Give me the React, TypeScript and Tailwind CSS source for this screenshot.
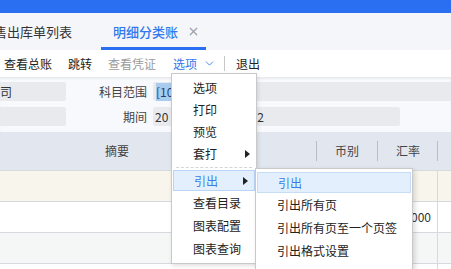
import { ChevronDown, X } from 'lucide-react';

const font = { fontFamily: '"Noto Sans CJK SC", "Noto Sans", sans-serif' };

function Arrow() {
  return <span className="ml-auto mr-[6px] h-0 w-0 border-y-[4px] border-l-[5px] border-y-transparent border-l-[#222]" />;
}

const rows = [
  { bg: 'bg-[#f8f6ec]', rate: '' },
  { bg: 'bg-white', rate: '000' },
  { bg: 'bg-[#f5f7f7]', rate: '' },
  { bg: 'bg-white', rate: '' },
];

export default function App() {
  return (
    <div className="relative h-[269px] w-[451px] overflow-hidden bg-white text-[12px] text-[#222]" style={font}>
      <div className="h-[13px] bg-[#2a6ff1]" />

      <div className="flex h-[37px] items-stretch overflow-hidden bg-[#f5f6fa]">
        <div className="-ml-[6px] flex w-[107px] shrink-0 items-center whitespace-nowrap text-[13px] text-[#333]">售出库单列表</div>
        <div className="flex w-[105px] items-center border-b-[3px] border-[#2a6ff1] pl-[12px] pt-[3px]">
          <span className="text-[13px] font-medium text-[#3178ee]">明细分类账</span>
          <X size={13} strokeWidth={2.2} className="ml-[9px] text-[#9aa0aa]" />
        </div>
      </div>

      <div className="flex h-[27px] items-center bg-white pl-[4px]">
        <span>查看总账</span>
        <span className="ml-[16px]">跳转</span>
        <span className="ml-[16px] text-[#9b9b9b]">查看凭证</span>
        <span className="ml-[17px] text-[#3178ee]">选项</span>
        <ChevronDown size={13} strokeWidth={1.6} className="ml-[6px] text-[#3178ee]" />
        <span className="ml-[8px] h-[15px] w-px bg-[#c8c8c8]" />
        <span className="ml-[11px]">退出</span>
      </div>

      <div className="bg-[#f8f9fc] pt-[5px] shadow-[inset_0_2px_2px_rgba(0,0,0,0.06)]">
        <div className="flex h-[19px] items-center">
          <div className="flex h-full w-[66px] items-center rounded-r-[2px] bg-[#e8eaee] text-[#333]">司</div>
          <span className="ml-auto w-[80px] pr-[6px] text-right text-[#444]">科目范围</span>
          <div className="flex h-full w-[298px] items-center rounded-l-[2px] bg-[#e8eaee] pl-[3px]">
            <span className="bg-[#a9cbee] text-[#1f3f7a]">[10</span>
          </div>
        </div>
        <div className="mt-[6px] flex h-[19px] items-center">
          <div className="h-full w-[66px] rounded-r-[2px] bg-[#e8eaee]" />
          <span className="ml-auto pr-[6px] text-[#444]">期间</span>
          <div className="mr-[51px] flex h-full w-[247px] items-center rounded-[2px] bg-[#e8eaee] pl-[2px] text-[#333]">
            <span>20</span>
            <span className="ml-[89px]">2</span>
          </div>
        </div>
        <div className="h-[6px]" />
      </div>

      <div className="grid h-[38px] grid-cols-[316px_61px_60px_14px] items-center bg-[#e2e6ef] text-[#444]">
        <div className="pl-[105px]">摘要</div>
        <div className="h-[20px] border-l border-[#b8bcc4] pl-[18px] leading-[20px]">币别</div>
        <div className="h-[20px] border-l border-[#b8bcc4] pl-[18px] leading-[20px]">汇率</div>
        <div className="h-[20px] border-l border-[#b8bcc4]" />
      </div>

      {rows.map((r, i) => (
        <div key={i} className={`grid h-[31px] grid-cols-[316px_61px_60px_14px] border-t border-[#d6d9de] ${r.bg}`}>
          <div />
          <div />
          <div className="flex items-center justify-end pr-[6px] text-[#333]">{r.rate}</div>
          <div className="border-l border-[#d6d9de]" />
        </div>
      ))}

      <div className="absolute left-[171px] top-[73px] w-[86px] border border-[#c9c9c9] bg-white pt-[3px] shadow-[1px_2px_4px_rgba(0,0,0,0.12)]">
        {['选项', '打印', '预览'].map((t) => (
          <div key={t} className="flex h-[22px] items-center pl-[21px]">{t}</div>
        ))}
        <div className="flex h-[22px] items-center pl-[21px]">
          套打
          <Arrow />
        </div>
        <div className="mx-[4px] my-[2px] border-t border-dashed border-[#d5d5d5]" />
        <div className="mx-px mt-[2px] flex h-[21px] items-center border border-[#b9d4f5] bg-[#e4effd] pl-[20px] text-[#3c7ce9]">
          引出
          <Arrow />
        </div>
        {['查看目录', '图表配置', '图表查询'].map((t) => (
          <div key={t} className="flex h-[23px] items-center pl-[21px]">{t}</div>
        ))}
        <div className="h-[3px]" />
      </div>

      <div className="absolute left-[255px] top-[168px] w-[158px] border border-[#c9c9c9] bg-white pt-[3px] shadow-[2px_2px_5px_rgba(0,0,0,0.15)]">
        <div className="mx-px flex h-[21px] items-center border border-[#c6dcf7] bg-[#e4effd] pl-[20px] text-[#3c7ce9]">引出</div>
        {['引出所有页', '引出所有页至一个页签', '引出格式设置'].map((t) => (
          <div key={t} className="flex h-[23px] items-center pl-[21px]">{t}</div>
        ))}
        <div className="h-[10px]" />
      </div>
    </div>
  );
}
